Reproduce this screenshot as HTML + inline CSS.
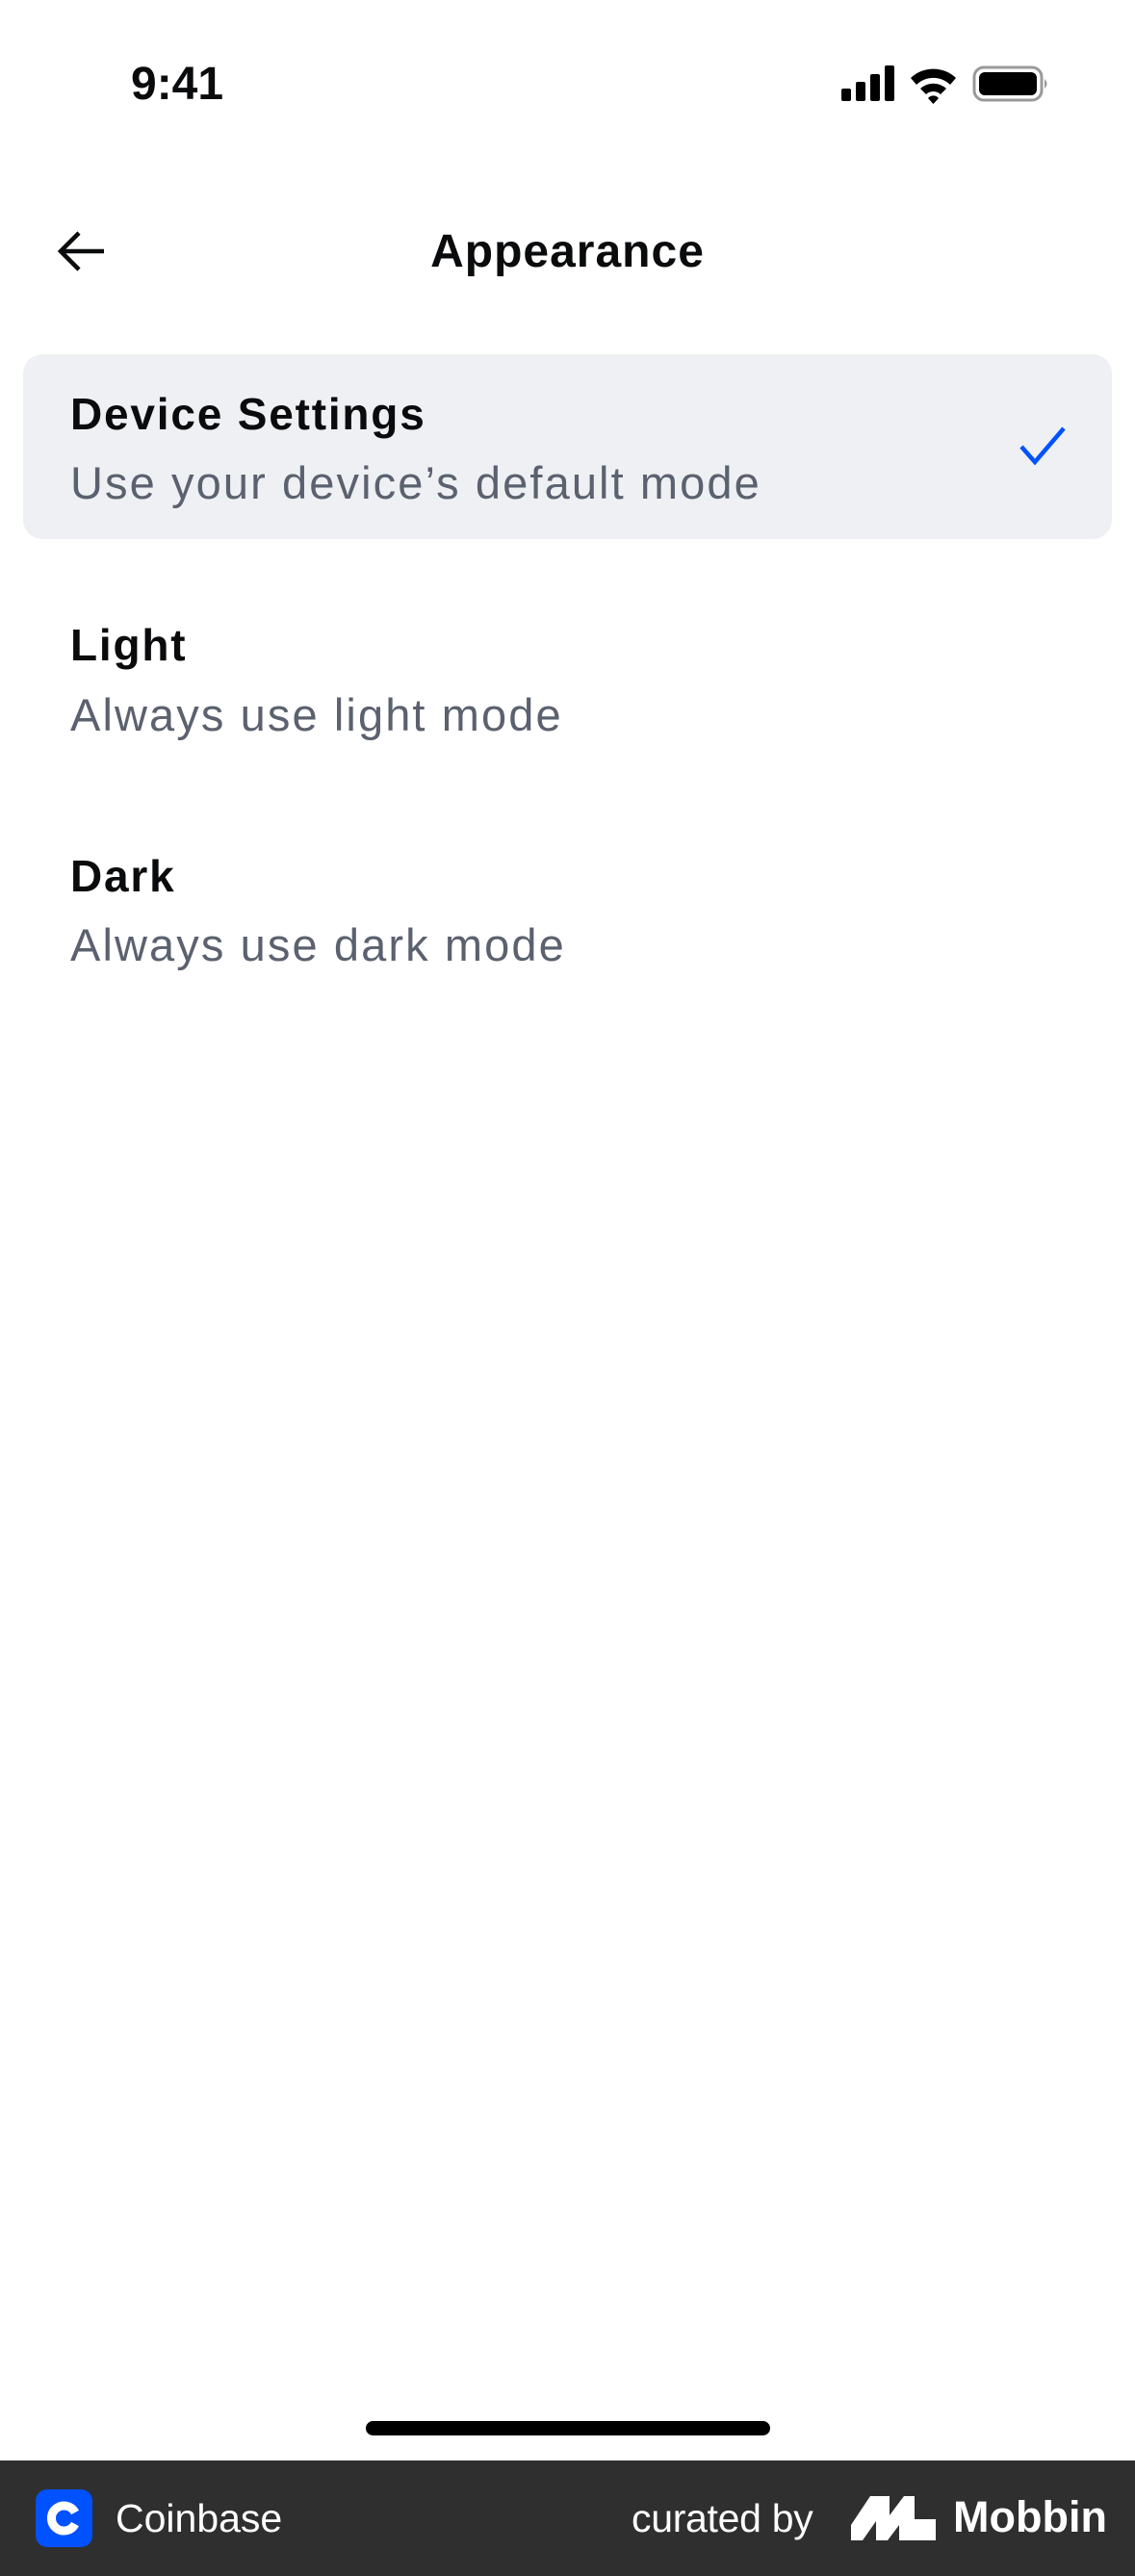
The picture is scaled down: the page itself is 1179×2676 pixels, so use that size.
<!DOCTYPE html>
<html><head><meta charset="utf-8"><style>
*{margin:0;padding:0;box-sizing:border-box}
body{width:1179px;height:2676px;background:#fff;position:relative;overflow:hidden;font-family:"Liberation Sans",sans-serif;color:#0a0b0d}
.a{position:absolute;white-space:nowrap}
.t{font-weight:bold;font-size:46px;line-height:60px;height:60px;letter-spacing:1.8px}
.s{font-size:47px;line-height:60px;height:60px;color:#5b616e;letter-spacing:2.1px}
</style></head><body>
<div class="a" style="left:136px;top:58px;font-size:48px;font-weight:bold;line-height:60px">9:41</div>
<svg class="a" style="left:872px;top:66px" width="220" height="44" viewBox="0 0 220 44">
<rect x="2" y="26" width="10" height="13" rx="2" fill="#000"/>
<rect x="17" y="19" width="10" height="20" rx="2" fill="#000"/>
<rect x="32" y="11" width="10" height="28" rx="2" fill="#000"/>
<rect x="47" y="2" width="10" height="37" rx="2" fill="#000"/>
<path d="M74 15 A34 34 0 0 1 121 15 L115 22 A25 25 0 0 0 80 22 Z" fill="#000"/>
<path d="M84 26 A20 20 0 0 1 111 26 L105 32 A11 11 0 0 0 90 32 Z" fill="#000"/>
<path d="M92 36 L97.5 42 L103 36 A7 7 0 0 0 92 36Z" fill="#000"/>
<rect x="140" y="4" width="70" height="34" rx="10" fill="none" stroke="#999" stroke-width="3"/>
<rect x="145" y="9" width="60" height="24" rx="6" fill="#000"/>
<path d="M213 16 Q218 21 213 26 Z" fill="#999"/>
</svg>
<svg class="a" style="left:58px;top:238px" width="54" height="46" viewBox="0 0 54 46">
<path d="M50 23 H6 M24 4 L5 23 L24 42" fill="none" stroke="#0a0b0d" stroke-width="4.5"/>
</svg>
<div class="a" style="left:0;width:1179px;text-align:center;top:232px;font-size:48px;font-weight:bold;line-height:60px;letter-spacing:1px">Appearance</div>
<div class="a" style="left:24px;top:368px;width:1131px;height:192px;background:#eef0f3;border-radius:20px"></div>
<div class="a t" style="left:73px;top:400px">Device Settings</div>
<div class="a s" style="left:73px;top:472px">Use your device’s default mode</div>
<svg class="a" style="left:1058px;top:442px" width="52" height="44" viewBox="0 0 52 44">
<path d="M3 22 L17 38 L47 3" fill="none" stroke="#0052ff" stroke-width="4.5"/>
</svg>
<div class="a t" style="left:73px;top:640px">Light</div>
<div class="a s" style="left:73px;top:713px">Always use light mode</div>
<div class="a t" style="left:73px;top:880px">Dark</div>
<div class="a s" style="left:73px;top:952px">Always use dark mode</div>
<div class="a" style="left:380px;top:2515px;width:420px;height:15px;border-radius:8px;background:#000"></div>
<div class="a" style="left:0;top:2556px;width:1179px;height:120px;background:#2f2f2f"></div>
<div class="a" style="left:37px;top:2586px;width:59px;height:60px;border-radius:12px;background:#0052ff"></div>
<svg class="a" style="left:37px;top:2586px" width="59" height="60" viewBox="0 0 59 60">
<path d="M41 24 A13 13 0 1 0 41 36" fill="none" stroke="#fff" stroke-width="9"/>
</svg>
<div class="a" style="left:120px;top:2592px;font-size:41px;line-height:48px;color:#fff">Coinbase</div>
<div class="a" style="left:656px;top:2592px;font-size:41px;line-height:48px;color:#fff;letter-spacing:-0.3px">curated by</div>
<svg class="a" style="left:884px;top:2593px" width="90" height="46" viewBox="0 0 90 46">
<path d="M0 46 L0 30 L20 0 L40 0 L40 20 L55 0 L66 0 L66 24 L88 24 L88 46 L50 46 L50 30 L38 46 L26 46 L26 26 L12 46 Z" fill="#fff"/>
</svg>
<div class="a" style="left:990px;top:2590px;font-size:45px;font-weight:bold;line-height:50px;color:#fff">Mobbin</div>
</body></html>
